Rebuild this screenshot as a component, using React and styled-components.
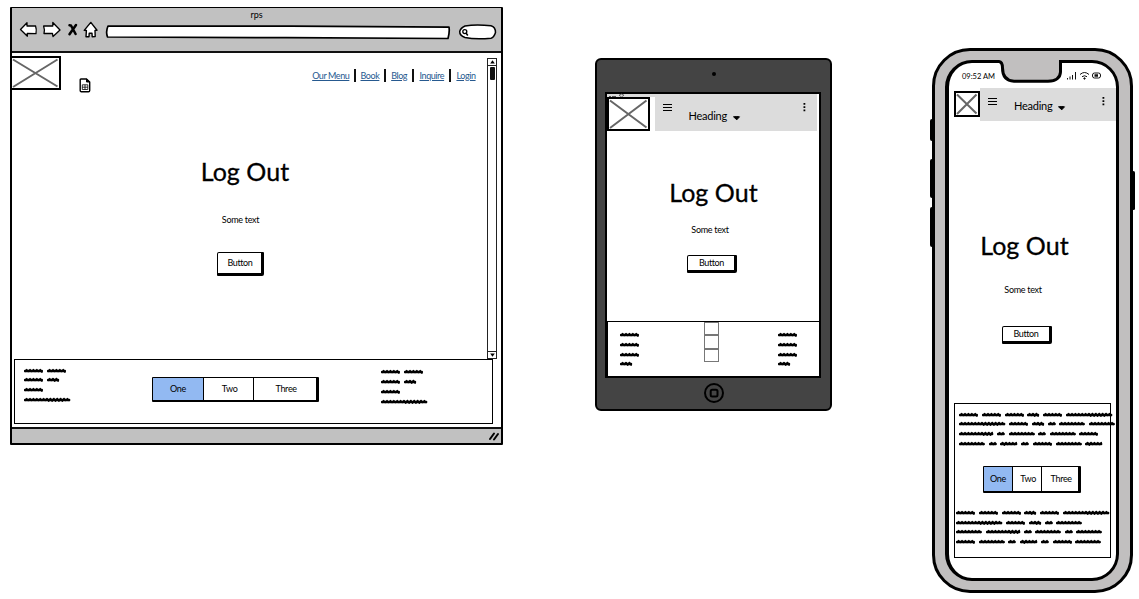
import React from "react";
import styled, { createGlobalStyle, css } from "styled-components";

const Global = createGlobalStyle`
  * { box-sizing: border-box; }
  body { margin: 0; background: #fff; color: #000; font-family: Lato, "Open Sans", sans-serif; }
  svg { display: block; flex: none; overflow: visible; }
`;

const Board = styled.main`
  display: flex;
  align-items: flex-start;
  width: 1139px;
  height: 599px;
  overflow: hidden;
  padding-left: 10px;
`;

/* ---------- shared parts ---------- */

const Title = styled.h1`
  margin: 0;
  font-size: 25px;
  font-weight: 400;
  line-height: 28px;
  letter-spacing: 0.05px;
  -webkit-text-stroke: 0.3px #000;
  white-space: nowrap;
`;

const Copy = styled.p`
  margin: 0;
  font-size: 9px;
  line-height: 12px;
  letter-spacing: -0.3px;
  white-space: nowrap;
`;

const PushButton = styled.button`
  width: ${(p) => p.$w}px;
  height: ${(p) => p.$h}px;
  padding: 0 0 0 1px;
  border: 1.5px solid #000;
  border-right-width: 3px;
  border-bottom-width: 3px;
  border-radius: 2px 1px 2px 1px;
  background: #fff;
  color: #000;
  font: 9px/12px Lato, sans-serif;
  letter-spacing: -0.4px;
`;

const Segments = styled.div`
  display: flex;
  width: ${(p) => p.$w}px;
  height: ${(p) => p.$h}px;
  border: 1px solid #000;
  border-right-width: 3px;
  border-bottom-width: 2px;
  border-radius: 1px;
`;

const Segment = styled.div`
  flex: ${(p) => p.$w} 0 0;
  display: flex;
  align-items: center;
  justify-content: center;
  padding: 0 0 1px ${(p) => (p.$on ? 0 : 2)}px;
  font-size: 9px;
  letter-spacing: -0.3px;
  background: ${(p) => (p.$on ? "#92b9f2" : "#fff")};
  & + & { border-left: 1.5px solid #000; }
`;

const PictureBox = styled.div`
  width: ${(p) => p.$w}px;
  height: ${(p) => p.$h}px;
  flex: none;
  border: 2px solid #000;
  background: #fff;
`;

function Picture({ w, h }) {
  const iw = w - 4;
  const ih = h - 4;
  return (
    <PictureBox $w={w} $h={h}>
      <svg width={iw} height={ih} stroke="#666" strokeWidth="2" fill="none">
        <path d={`M1 1.5L${iw - 1.5} ${ih - 1.5}M${iw - 1.5} 1.5L1 ${ih - 1}`} />
      </svg>
    </PictureBox>
  );
}

const ScribbleBlock = styled.div`
  display: flex;
  flex-direction: column;
  gap: 2.8px;
  flex: none;
`;

const ScribbleLine = styled.div`
  display: flex;
  gap: 3.6px;
  height: 7px;
`;

function Word({ w }) {
  let d = "M1 4.4";
  let up = true;
  for (let x = 2.6; x < w - 0.8; x += 1.7) {
    const lift = Math.round(x * 7 + w) % 3 === 0 ? 0.6 : 0;
    d += ` L${x.toFixed(1)} ${up ? 2.7 - lift * 0.3 : 4.5 + lift}`;
    up = !up;
  }
  return (
    <svg width={w} height="7" fill="none" stroke="#000" strokeLinecap="round" strokeLinejoin="round">
      <path d={`M1.2 4H${w - 1.4}`} strokeWidth="2.5" />
      <path d={d} strokeWidth="1.6" />
    </svg>
  );
}

function Scribble({ lines }) {
  return (
    <ScribbleBlock>
      {lines.map((words, i) => (
        <ScribbleLine key={i}>
          {words.map((w, j) => <Word key={j} w={w} />)}
        </ScribbleLine>
      ))}
    </ScribbleBlock>
  );
}

const Offset = styled.div`
  padding-top: ${(p) => p.$t}px;
  padding-left: ${(p) => p.$l || 0}px;
  width: ${(p) => (p.$w ? p.$w + "px" : "auto")};
  flex: none;
`;

/* ---------- browser ---------- */

const Browser = styled.section`
  display: flex;
  flex-direction: column;
  width: 493px;
  height: 438px;
  margin-top: 7px;
  flex: none;
  border: 2px solid #000;
  border-top-width: 1.5px;
  border-radius: 1px;
  background: #fff;
`;

const Chrome = styled.header`
  height: 45px;
  flex: none;
  background: #c1c1c1;
  border-bottom: 2px solid #111;
`;

const WindowTitle = styled.div`
  height: 14px;
  font-size: 9px;
  line-height: 14px;
  text-align: center;
`;

const ToolRow = styled.div`
  display: flex;
  align-items: center;
  height: 16px;
  padding-left: 8px;
`;

const Tool = styled.div`
  margin-right: ${(p) => p.$gap}px;
`;

const View = styled.div`
  display: flex;
  height: 306px;
  padding-top: 3px;
  flex: none;
`;

const LogoCol = styled.div`
  display: flex;
  width: 175px;
  margin-left: -2px;
  gap: 18px;
  & > svg { margin-top: 22px; }
`;

const Center = styled.div`
  display: flex;
  flex-direction: column;
  align-items: center;
  width: 120px;
  padding-top: 101px;
`;

const BrowserCopy = styled(Copy)`
  margin: 29px 0 26px -9px;
`;

const BrowserButtonWrap = styled.div`
  display: flex;
  margin-left: -9px;
`;

const HeadArea = styled.div`
  position: relative;
  display: flex;
  width: 475px;
  flex: none;
`;

const Nav = styled.nav`
  position: absolute;
  right: 11px;
  top: 13px;
  display: flex;
  align-items: center;
  height: 13px;
`;

const NavLink = styled.a`
  display: flex;
  justify-content: center;
  width: ${(p) => p.$w}px;
  color: #26598f;
  font-size: 9px;
  letter-spacing: -0.42px;
  line-height: 12px;
  text-decoration: underline;
  text-underline-offset: 1px;
  white-space: nowrap;
`;

const Bar = styled.i`
  width: 2px;
  height: 13px;
  margin: 0 4.6px;
  background: #111;
`;

const ScrollTrack = styled.div`
  display: flex;
  flex-direction: column;
  width: 10px;
  height: 301px;
  margin-top: 2px;
  border: 1.2px solid #222;
`;

const ScrollEnd = styled.div`
  display: flex;
  align-items: center;
  justify-content: center;
  height: 7px;
  border-bottom: ${(p) => (p.$last ? "0" : "1px solid #222")};
  border-top: ${(p) => (p.$last ? "1px solid #222" : "0")};
`;

const Thumb = styled.div`
  width: 5px;
  height: 13px;
  margin: 1px auto auto;
  border-radius: 1px;
  background: #111;
`;

const FootBox = styled.footer`
  display: flex;
  width: 479px;
  height: 65px;
  flex: none;
  margin-left: 2px;
  border: 1.5px solid #000;
  background: #fff;
`;

const StatusBar = styled.div`
  display: flex;
  justify-content: flex-end;
  align-items: center;
  height: 16px;
  margin-top: auto;
  padding-right: 2px;
  flex: none;
  background: #c1c1c1;
  border-top: 2px solid #111;
`;

const COLUMN = [[19.2, 19.2], [19.2, 12.4], [19.2], [46.5]];

function BrowserWindow() {
  return (
    <Browser>
      <Chrome>
        <WindowTitle>rps</WindowTitle>
        <ToolRow>
          <Tool $gap={6}>
            <svg width="17" height="16" fill="#fff" stroke="#000" strokeWidth="1.3" strokeLinejoin="round">
              <path d="M0.5 7.500L7 .8L7 4L15.500 3.800Q16.800 7.500 16 11.700L7.200 11.300L7.400 14.200Z" />
            </svg>
          </Tool>
          <Tool $gap={8}>
            <svg width="17" height="16" fill="#fff" stroke="#000" strokeWidth="1.3" strokeLinejoin="round">
              <path d="M.6 4L9.800 4L9.800 .5L17 8L10 14.500L9.500 11.500L1 11.500Q2 8 .6 4Z" />
            </svg>
          </Tool>
          <Tool $gap={7}>
            <svg width="9" height="16" fill="none" stroke="#000" strokeWidth="2.5" strokeLinecap="round">
              <path d="M1.500 3.200L3 3.500L7.600 12M8 3L1.500 12.300" />
            </svg>
          </Tool>
          <Tool $gap={9}>
            <svg width="13" height="16" fill="#fff" stroke="#000" strokeWidth="1.4" strokeLinejoin="round">
              <path d="M6.800 .4L13 8.200L11 8.400L11.200 14.600L8.200 14.700L8 11.300L5.200 11.300L5 14.800L2 14.800L2.400 8.500L.2 8.400Z" />
            </svg>
          </Tool>
          <Tool $gap={9}>
            <svg width="344" height="16" fill="#fff" stroke="#000" strokeWidth="1.7" strokeLinejoin="round">
              <path d="M2 4L185 4.200L343 5.200Q343.800 10 342 16.500L180 15.700L1.500 15Q-.5 10 2 4Z" />
            </svg>
          </Tool>
          <svg width="37" height="16" fill="#fff" stroke="#000" strokeWidth="1.5">
            <path d="M6 4Q17 2 32 3.800Q36.500 5 36.500 10.500Q35 15.500 32 16.200Q16 17.500 6 15.500Q.5 13.500 .7 9.500Q1.500 6 6 4Z" />
            <circle cx="5.800" cy="9.600" r="2" strokeWidth="1.300" />
            <path d="M7 11L8.800 13.500" />
          </svg>
        </ToolRow>
      </Chrome>
      <View>
        <HeadArea>
          <LogoCol>
            <Picture w={51} h={34} />
            <svg width="12" height="14" fill="none" stroke="#000" strokeLinejoin="round">
              <path d="M2 1H7.500L10.700 4V12.500Q10.700 13.700 9.500 13.700H2.300Q1.200 13.700 1.200 12.500V2Q1.200 1 2 1Z" strokeWidth="1.4" />
              <path d="M7.500 1V4H10.700Z" fill="#000" />
              <path d="M3.300 6.800H8.800V11.500H3.300ZM3.300 9.200H8.800M6 6.800V11.500" strokeWidth=".8" />
            </svg>
          </LogoCol>
          <Center>
            <Title>Log Out</Title>
            <BrowserCopy>Some text</BrowserCopy>
            <BrowserButtonWrap><PushButton $w={47} $h={24}>Button</PushButton></BrowserButtonWrap>
          </Center>
          <Nav>
            <NavLink $w={37}>Our Menu</NavLink><Bar />
            <NavLink $w={19}>Book</NavLink><Bar />
            <NavLink $w={17}>Blog</NavLink><Bar />
            <NavLink $w={26}>Inquire</NavLink><Bar />
            <NavLink $w={20}>Login</NavLink>
          </Nav>
        </HeadArea>
        <ScrollTrack>
          <ScrollEnd><svg width="5" height="4"><path d="M2.500 .3L4.800 3.500H.2Z" /></svg></ScrollEnd>
          <Thumb />
          <ScrollEnd $last><svg width="5" height="4"><path d="M2.500 3.700L4.800 .5H.2Z" /></svg></ScrollEnd>
        </ScrollTrack>
      </View>
      <FootBox>
        <Offset $t={6.5} $l={9} $w={137}><Scribble lines={COLUMN} /></Offset>
        <Offset $t={17} $w={229}>
          <Segments $w={167} $h={25}>
            <Segment $w={52} $on>One</Segment>
            <Segment $w={49}>Two</Segment>
            <Segment $w={62}>Three</Segment>
          </Segments>
        </Offset>
        <Offset $t={8.3}><Scribble lines={COLUMN} /></Offset>
      </FootBox>
      <StatusBar>
        <svg width="10" height="10" stroke="#000" strokeWidth="2" strokeLinecap="round">
          <path d="M1 8L5 2.500M5 8.500L9 3" />
        </svg>
      </StatusBar>
    </Browser>
  );
}

/* ---------- mobile heading ---------- */

const AppBar = styled.div`
  display: flex;
  width: ${(p) => p.$w}px;
  height: ${(p) => p.$h}px;
  background: #dcdcdc;
`;

const HeadingText = styled.div`
  font-size: 11px;
  line-height: 14px;
  letter-spacing: -0.25px;
  white-space: nowrap;
`;

function BarContents({ menuTop, headTop, lead, rest, tail }) {
  return (
    <>
      <Offset $t={menuTop} $l={lead} $w={lead + 26}>
        <svg width="9" height="8" stroke="#000" strokeWidth="1"><path d="M0 .5H9M0 3.500H9M0 6.500H9" /></svg>
      </Offset>
      <Offset $t={headTop} $w={44}><HeadingText>Heading</HeadingText></Offset>
      <Offset $t={headTop + 7} $w={rest}>
        <svg width="8" height="5"><path d="M.5 .8Q4 .2 6.500 .8L3.800 3.800Z" stroke="#000" /></svg>
      </Offset>
      <Offset $t={menuTop + tail}>
        <svg width="3" height="9"><path d="M.5 0H2.300V1.800H.5ZM.5 3.200H2.300V5H.5ZM.5 6.400H2.300V8.200H.5Z" /></svg>
      </Offset>
    </>
  );
}

/* ---------- tablet ---------- */

const Tablet = styled.section`
  display: flex;
  flex-direction: column;
  align-items: center;
  width: 237px;
  height: 353px;
  margin: 58px 0 0 92px;
  flex: none;
  border: 2px solid #000;
  border-radius: 6px;
  background: #444;
`;

const Camera = styled.div`
  width: 4px;
  height: 4px;
  margin: 12px 0 16px;
  border-radius: 50%;
  background: #000;
`;

const TabletScreen = styled.div`
  display: flex;
  flex-direction: column;
  width: 216px;
  height: 286px;
  margin-left: -2px;
  flex: none;
  border: 2px solid #000;
  background: #fff;
`;

const TabletStatus = styled.div`
  display: flex;
  align-items: center;
  height: 3px;
  padding-left: 2px;
  gap: 3px;
  background: #dcdcdc;
  flex: none;
  width: 210px;
`;

const TabletTop = styled.div`
  display: flex;
  gap: 5px;
  height: 34px;
  flex: none;
`;

const TabletBody = styled.div`
  display: flex;
  flex-direction: column;
  align-items: center;
  height: 190px;
  flex: none;
  padding: 47px 0 0 2px;
`;

const TabletCopy = styled(Copy)`
  margin: 18px 0 19px -7px;
`;

const TabletButtonWrap = styled.div`
  display: flex;
  margin-left: -3px;
`;

const TabletFoot = styled.footer`
  display: flex;
  height: 55px;
  border-top: 1.5px solid #000;
  border-left: 1px solid #000;
  flex: none;
`;

const Checks = styled.div`
  display: flex;
  flex-direction: column;
  width: 74px;
  flex: none;
`;

const Check = styled.i`
  width: 15px;
  height: 13.3px;
  border: 1px solid #777;
`;

const Home = styled.div`
  margin-top: 5px;
`;

const SHORT = [[19.2], [19.2], [19.2], [12.4]];

function TabletDevice() {
  return (
    <Tablet>
      <Camera />
      <TabletScreen>
        <TabletStatus>
          <svg width="7" height="2" stroke="#555" strokeWidth="1"><path d="M0 1.500H2M3 1.500H7" /></svg>
          <svg width="5" height="3" fill="none" stroke="#555" strokeWidth=".8"><path d="M0 1.200Q2.500-1 5 1.200L2.500 3Z" /></svg>
        </TabletStatus>
        <TabletTop>
          <Picture w={43} h={34} />
          <AppBar $w={162} $h={34}>
            <BarContents menuTop={7} headTop={12} lead={8} rest={70} tail={-1} />
          </AppBar>
        </TabletTop>
        <TabletBody>
          <Title>Log Out</Title>
          <TabletCopy>Some text</TabletCopy>
          <TabletButtonWrap><PushButton $w={50} $h={18}>Button</PushButton></TabletButtonWrap>
        </TabletBody>
        <TabletFoot>
          <Offset $t={9} $l={12} $w={96}><Scribble lines={SHORT} /></Offset>
          <Checks><Check /><Check /><Check /></Checks>
          <Offset $t={9}><Scribble lines={SHORT} /></Offset>
        </TabletFoot>
      </TabletScreen>
      <Home>
        <svg width="20" height="20" fill="none" stroke="#000" strokeWidth="2">
          <circle cx="10" cy="10" r="9" />
          <rect x="6.7" y="6.7" width="6.8" height="6.8" rx="1.5" />
        </svg>
      </Home>
    </Tablet>
  );
}

/* ---------- phone ---------- */

const Phone = styled.section`
  position: relative;
  width: 201px;
  height: 545px;
  margin: 48px 0 0 100px;
  padding: 9px 0 0 10px;
  flex: none;
  border: 3px solid #000;
  border-radius: 38px;
  background: #c1bfbf;
`;

const SideKey = styled.i`
  position: absolute;
  top: ${(p) => p.$y}px;
  height: ${(p) => p.$h}px;
  width: 3.5px;
  border-radius: 2px;
  background: #000;
  ${(p) => (p.$right ? css`right: -5px;` : css`left: -5px;`)}
`;

const Notch = styled.div`
  position: absolute;
  left: 63px;
  top: 9px;
`;

const PhoneScreen = styled.div`
  width: 174px;
  height: 521px;
  border: 3px solid #000;
  border-left-width: 4px;
  border-radius: 27px;
  background: #fff;
`;

const PhoneStatus = styled.div`
  display: flex;
  justify-content: space-between;
  height: 25px;
  padding: 9px 13px 0 13px;
  font-size: 7.5px;
  line-height: 9px;
  & > svg { margin-top: -1px; }
`;

const PhoneTop = styled.div`
  display: flex;
  align-items: flex-start;
  height: 33px;
  padding-left: 5px;
`;

const PhonePicture = styled.div`
  margin-top: 3px;
`;

const PhoneBody = styled.div`
  display: flex;
  flex-direction: column;
  align-items: center;
  height: 282px;
  padding: 110px 9px 0 0;
`;

const PhoneTitle = styled(Title)`
  margin-left: -7px;
`;

const PhoneCopy = styled(Copy)`
  margin: 25px 0 30px -10px;
`;

const PhoneButtonWrap = styled.div`
  display: flex;
  margin-left: -3px;
`;

const PhoneFoot = styled.footer`
  width: 157px;
  height: 155px;
  margin-left: 5px;
  padding-top: 6.6px;
  border: 1.5px solid #000;
`;

const PhoneSegments = styled(Segments)`
  margin: 19.4px 0 15.4px 28px;
`;

const TOP_TEXT = [
  [19.2, 19.2, 19.2, 12.4, 19.2, 46.5],
  [46.5, 19.2, 12.4, 8, 26, 26],
  [34.5, 8, 26, 8, 26, 19.2],
  [26, 8, 17.5, 8, 19.2, 26, 17.5],
];
const BOTTOM_TEXT = [
  [19.2, 19.2, 19.2, 12.4, 19.2, 46.5],
  [46.5, 19.2, 12.4, 8, 26],
  [26, 34.5, 8, 26, 8, 26],
  [19.2, 26, 8, 17.5, 8, 19.2, 26],
];

function PhoneDevice() {
  return (
    <Phone>
      <SideKey $y={68} $h={22} />
      <SideKey $y={108} $h={39} />
      <SideKey $y={156} $h={40} />
      <SideKey $y={120} $h={39} $right />
      <PhoneScreen>
        <PhoneStatus>
          <span>09:52 AM</span>
          <svg width="36" height="9" fill="none" stroke="#111" strokeWidth="1">
            <path d="M.5 7V8.500M3 5.500V8.500M5.500 4V8.500M8.500 1V8.500M13 3.500Q17.500-.5 22 3.500M15 5.700Q17.500 3.800 20 5.700" />
            <circle cx="17.5" cy="7.5" r=".7" fill="#111" />
            <rect x="25.5" y="2" width="8" height="5" rx="2" />
            <path d="M27.500 4.500H31" strokeWidth="2.5" />
          </svg>
        </PhoneStatus>
        <PhoneTop>
          <PhonePicture><Picture w={26} h={26} /></PhonePicture>
          <AppBar $w={136} $h={33}>
            <BarContents menuTop={10} headTop={11} lead={8} rest={44} tail={-1} />
          </AppBar>
        </PhoneTop>
        <PhoneBody>
          <PhoneTitle>Log Out</PhoneTitle>
          <PhoneCopy>Some text</PhoneCopy>
          <PhoneButtonWrap><PushButton $w={50} $h={18}>Button</PushButton></PhoneButtonWrap>
        </PhoneBody>
        <PhoneFoot>
          <Offset $t={0} $l={4}><Scribble lines={TOP_TEXT} /></Offset>
          <PhoneSegments $w={98} $h={27}>
            <Segment $w={30} $on>One</Segment>
            <Segment $w={28}>Two</Segment>
            <Segment $w={36}>Three</Segment>
          </PhoneSegments>
          <Offset $t={0} $l={1}><Scribble lines={BOTTOM_TEXT} /></Offset>
        </PhoneFoot>
      </PhoneScreen>
      <Notch>
        <svg width="68" height="24">
          <path d="M1 0V3Q4.500 3 4.500 8Q4.500 20.500 16 21.500H50Q62 21 62.500 12V3H67V0Z" fill="#c1bfbf" />
          <path d="M0 1.500H1Q4.500 2 4.500 8Q4.500 20.500 16 21.300H50Q62 21 62.500 12V1.500H67" fill="none" stroke="#000" strokeWidth="3" />
        </svg>
      </Notch>
    </Phone>
  );
}

export default function App() {
  return (
    <>
      <Global />
      <Board>
        <BrowserWindow />
        <TabletDevice />
        <PhoneDevice />
      </Board>
    </>
  );
}
